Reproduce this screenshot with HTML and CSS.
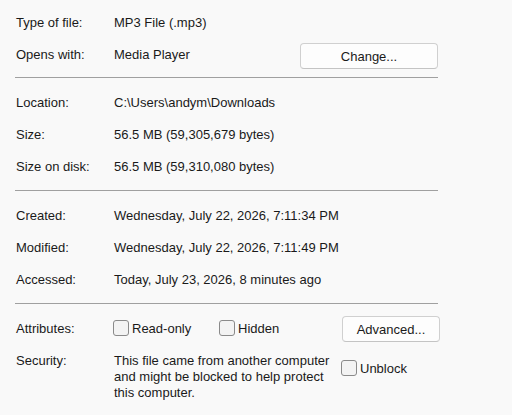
FILE: index.html
```html
<!DOCTYPE html>
<html lang="en">

<head>
    <meta charset="UTF-8">
    <title>File Properties</title>
    <link rel="stylesheet" href="styles.css">
</head>

<body>
    <div class="panel">
        <div class="section first">
            <div class="row">
                <span class="label">Type of file:</span>
                <span class="value">MP3 File (.mp3)</span>
            </div>
            <div class="row">
                <span class="label">Opens with:</span>
                <span class="value grow">Media Player</span>
                <button class="btn btn-change">Change...</button>
            </div>
        </div>

        <hr class="divider first-divider">

        <div class="section">
            <div class="row">
                <span class="label">Location:</span>
                <span class="value">C:\Users\andym\Downloads</span>
            </div>
            <div class="row">
                <span class="label">Size:</span>
                <span class="value">56.5 MB (59,305,679 bytes)</span>
            </div>
            <div class="row">
                <span class="label">Size on disk:</span>
                <span class="value">56.5 MB (59,310,080 bytes)</span>
            </div>
        </div>

        <hr class="divider">

        <div class="section">
            <div class="row">
                <span class="label">Created:</span>
                <span class="value">Wednesday, July 22, 2026, 7:11:34 PM</span>
            </div>
            <div class="row">
                <span class="label">Modified:</span>
                <span class="value">Wednesday, July 22, 2026, 7:11:49 PM</span>
            </div>
            <div class="row">
                <span class="label">Accessed:</span>
                <span class="value">Today, July 23, 2026, 8 minutes ago</span>
            </div>
        </div>

        <hr class="divider">

        <div class="section">
            <div class="row">
                <span class="label">Attributes:</span>
                <label class="check check-readonly"><span class="box"></span>Read-only</label>
                <label class="check check-hidden"><span class="box"></span>Hidden</label>
                <button class="btn btn-advanced">Advanced...</button>
            </div>
            <div class="row row-security">
                <span class="label">Security:</span>
                <p class="security-text">This file came from another computer<br>and might be blocked to help protect<br>this computer.</p>
                <label class="check check-unblock"><span class="box"></span>Unblock</label>
            </div>
        </div>
    </div>
</body>

</html>
```

FILE: styles.css
```css
body {
    font-family: "Liberation Sans", Arial, sans-serif;
    font-size: 13px;
    color: #1a1a1a;
    background-color: #f9f9f9;
    margin: 0;
    padding: 6px 0 0 15px;
}

.panel {
    width: 423px;
}

.row {
    display: flex;
    align-items: center;
    height: 32px;
}

.label {
    width: 98px;
    padding-left: 1px;
    flex-shrink: 0;
}

.value.grow {
    flex: 1;
}

.divider {
    border: none;
    border-top: 1px solid #a0a0a0;
    margin: 8px 0;
}

.first-divider {
    margin-top: 7px;
}

.btn {
    font-family: inherit;
    font-size: 13px;
    color: #1a1a1a;
    background: #fdfdfd;
    border: 1px solid #d0d0d0;
    border-bottom-color: #c4c4c4;
    border-radius: 4px;
    height: 26px;
    padding: 0;
    margin-top: 4px;
}

.btn-change {
    width: 138px;
    margin-right: 0;
}

.btn-advanced {
    width: 98px;
    margin-left: auto;
    margin-right: -2px;
    margin-top: 2px;
}

.check {
    display: flex;
    align-items: center;
}

.box {
    width: 14px;
    height: 14px;
    border: 1px solid #8a8a8a;
    border-radius: 3px;
    background: #f3f3f3;
    margin-right: 3px;
}

.check-readonly {
    margin-left: -1px;
    width: 106px;
}

.row-security {
    height: auto;
    align-items: flex-start;
    margin-top: 9px;
}

.security-text {
    margin: 0;
    line-height: 16px;
    width: 227px;
}

.check-unblock {
    margin-top: 7px;
}
```
